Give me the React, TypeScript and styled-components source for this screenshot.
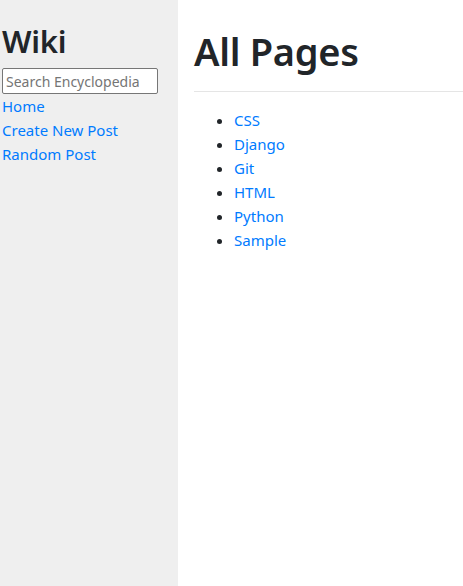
import styled, { createGlobalStyle } from 'styled-components';

const GlobalStyle = createGlobalStyle`
  html, body {
    margin: 0;
    padding: 0;
    background: #ffffff;
  }
  body {
    font-family: "Noto Sans", "Liberation Sans", sans-serif;
    font-size: 15px;
    line-height: 24px;
    color: #212529;
  }
`;

const Layout = styled.div`
  display: flex;
  min-height: 586px;
`;

const Sidebar = styled.aside`
  width: 176px;
  flex-shrink: 0;
  background-color: #efefef;
  padding: 22px 0 0 2px;
`;

const Brand = styled.h2`
  margin: 0 0 8px;
  font-size: 31px;
  font-weight: 600;
  line-height: 38px;
  letter-spacing: -0.3px;
`;

const Search = styled.input`
  display: block;
  box-sizing: border-box;
  width: 156px;
  height: 26px;
  margin: 0;
  padding: 1px 3px;
  border: 1px solid #767676;
  border-radius: 2px;
  background: #ffffff;
  font-family: inherit;
  font-size: 14px;
  color: #212529;

  &::placeholder {
    color: #757575;
  }
`;

const NavLink = styled.a`
  display: block;
  color: #007bff;
  text-decoration: none;
`;

const Main = styled.main`
  flex: 1;
  padding: 27px 0 0 16px;
`;

const Title = styled.h1`
  margin: 0 0 8px;
  font-size: 38px;
  font-weight: 600;
  line-height: 48px;
  letter-spacing: -0.3px;
`;

const Rule = styled.hr`
  margin: 16px 0;
  border: 0;
  border-top: 1px solid rgba(0, 0, 0, 0.1);
`;

const PageList = styled.ul`
  margin: 0 0 16px;
  padding-left: 40px;
`;

const PageLink = styled.a`
  color: #007bff;
  text-decoration: none;
`;

const pages = ['CSS', 'Django', 'Git', 'HTML', 'Python', 'Sample'];

function App() {
  return (
    <>
      <GlobalStyle />
      <Layout>
        <Sidebar>
          <Brand>Wiki</Brand>
          <form>
            <Search type="text" name="q" placeholder="Search Encyclopedia" />
          </form>
          <NavLink href="#">Home</NavLink>
          <NavLink href="#">Create New Post</NavLink>
          <NavLink href="#">Random Post</NavLink>
        </Sidebar>
        <Main>
          <Title>All Pages</Title>
          <Rule />
          <PageList>
            {pages.map((page) => (
              <li key={page}>
                <PageLink href="#">{page}</PageLink>
              </li>
            ))}
          </PageList>
        </Main>
      </Layout>
    </>
  );
}

export default App;
